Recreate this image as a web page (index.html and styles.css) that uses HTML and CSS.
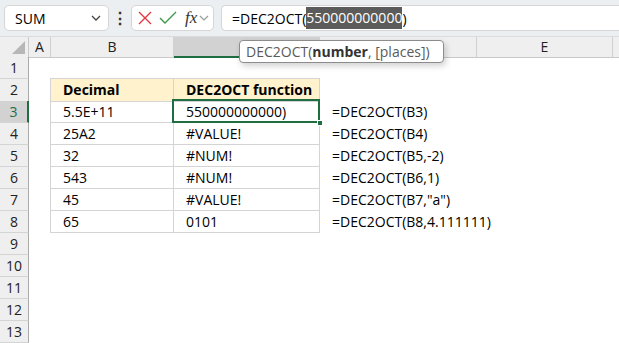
FILE: index.html
```html
<!DOCTYPE html>
<html lang="en">
<head>
    <meta charset="UTF-8">
    <title>DEC2OCT</title>
    <link rel="stylesheet" href="styles.css">
</head>
<body>
    <div class="topbar">
        <div class="namebox">
            <span>SUM</span>
            <svg width="12" height="8" viewBox="0 0 12 8"><path d="M2 2l4 4 4-4" fill="none" stroke="#444" stroke-width="1.3"/></svg>
        </div>
        <div class="dots">&#8942;</div>
        <div class="btngroup">
            <svg width="16" height="16" viewBox="0 0 16 16"><path d="M2 2l12 12M14 2L2 14" stroke="#e0393e" stroke-width="1.4" fill="none"/></svg>
            <svg width="18" height="16" viewBox="0 0 18 16"><path d="M1 8l5 5L17 2" stroke="#3a9a4a" stroke-width="1.4" fill="none"/></svg>
            <span class="fx">fx</span>
            <svg width="10" height="8" viewBox="0 0 10 8"><path d="M1 2l4 4 4-4" fill="none" stroke="#999" stroke-width="1.2"/></svg>
        </div>
        <div class="formula">=DEC2OCT(<span class="sel">550000000000</span>)</div>
    </div>

    <div class="sheet">
        <div class="row colheads">
            <div class="corner"><span class="tri"></span></div>
            <div class="ch">A</div>
            <div class="ch">B</div>
            <div class="ch active"></div>
            <div class="ch"></div>
            <div class="ch">E</div>
            <div class="ch last"></div>
            <div class="tooltip">DEC2OCT(<b>number</b>, [places])</div>
        </div>
        <div class="row"><div class="rh">1</div><div></div><div></div><div></div><div></div><div></div><div></div></div>
        <div class="row"><div class="rh">2</div><div></div><div class="cell head first">Decimal</div><div class="cell head">DEC2OCT function</div><div></div><div></div><div></div></div>
        <div class="row"><div class="rh active">3</div><div></div><div class="cell first">5.5E+11</div><div class="cell selected">550000000000)</div><div class="txt">=DEC2OCT(B3)</div><div></div><div></div></div>
        <div class="row"><div class="rh">4</div><div></div><div class="cell first">25A2</div><div class="cell">#VALUE!</div><div class="txt">=DEC2OCT(B4)</div><div></div><div></div></div>
        <div class="row"><div class="rh">5</div><div></div><div class="cell first">32</div><div class="cell">#NUM!</div><div class="txt">=DEC2OCT(B5,-2)</div><div></div><div></div></div>
        <div class="row"><div class="rh">6</div><div></div><div class="cell first">543</div><div class="cell">#NUM!</div><div class="txt">=DEC2OCT(B6,1)</div><div></div><div></div></div>
        <div class="row"><div class="rh">7</div><div></div><div class="cell first">45</div><div class="cell">#VALUE!</div><div class="txt">=DEC2OCT(B7,"a")</div><div></div><div></div></div>
        <div class="row"><div class="rh">8</div><div></div><div class="cell first bottom">65</div><div class="cell bottom">0101</div><div class="txt">=DEC2OCT(B8,4.111111)</div><div></div><div></div></div>
        <div class="row"><div class="rh">9</div></div>
        <div class="row"><div class="rh">10</div></div>
        <div class="row"><div class="rh">11</div></div>
        <div class="row"><div class="rh">12</div></div>
        <div class="row"><div class="rh">13</div></div>
    </div>
</body>
</html>
```

FILE: styles.css
```css
body {
    margin: 0;
    width: 619px;
    height: 343px;
    overflow: hidden;
    background: #fff;
    font-family: "Open Sans", "Liberation Sans", Arial, sans-serif;
    font-size: 14px;
    color: #000;
}

.topbar {
    height: 36px;
    background: #ebeff1;
    display: flex;
    align-items: center;
    padding-left: 4px;
    box-sizing: border-box;
}

.namebox {
    width: 105px;
    height: 26px;
    box-sizing: border-box;
    background: #fff;
    border: 1px solid #d6d6d6;
    border-radius: 5px;
    display: flex;
    align-items: center;
    justify-content: space-between;
    padding: 0 6px 0 10px;
    font-size: 14px;
}

.dots {
    width: 22px;
    text-align: center;
    font-size: 16px;
    font-weight: bold;
    color: #333;
}

.btngroup {
    width: 83px;
    height: 26px;
    box-sizing: border-box;
    background: #fff;
    border: 1px solid #d6d6d6;
    border-radius: 5px;
    display: flex;
    align-items: center;
    gap: 6px;
    padding-left: 5px;
}

.fx {
    font-family: "Liberation Serif", serif;
    font-style: italic;
    font-size: 17px;
    color: #333;
    margin-left: 2px;
    margin-right: -4px;
}

.formula {
    flex: 1;
    height: 26px;
    margin-left: 7px;
    box-sizing: border-box;
    background: #fff;
    border: 1px solid #d6d6d6;
    border-right: none;
    border-radius: 5px 0 0 5px;
    display: flex;
    align-items: center;
    padding-left: 10px;
    font-size: 14px;
}

.formula .sel {
    background: #5b5b5b;
    color: #fff;
    padding: 1px 0 2px;
}

.row {
    display: grid;
    grid-template-columns: 29px 22px 123px 146px 157px 136px 6px;
    height: 22px;
    position: relative;
}

.colheads {
    height: 21px;
    background: #efefef;
    border-top: 1px solid #dcdcdc;
    box-sizing: border-box;
}

.corner {
    position: relative;
    border-right: 1px solid #c9c9c9;
    border-bottom: 1px solid #c9c9c9;
}

.tri {
    position: absolute;
    right: 3px;
    bottom: 3px;
    width: 0;
    height: 0;
    border-left: 13px solid transparent;
    border-bottom: 13px solid #b7b7b7;
}

.ch {
    border-right: 1px solid #d0d0d0;
    border-bottom: 1px solid #c9c9c9;
    text-align: center;
    line-height: 20px;
    font-size: 14px;
    color: #222;
}

.ch.active {
    background: #d2d2d2;
    border-bottom: 2px solid #1e6e42;
}

.ch.last {
    border-right: none;
}

.rh {
    background: #efefef;
    border-right: 1px solid #a9a9a9;
    border-bottom: 1px solid #d4d4d4;
    text-align: center;
    line-height: 21px;
    font-size: 14px;
    color: #222;
}

.rh.active {
    background: #d2d2d2;
    color: #1e6e42;
    border-right: 2px solid #1e6e42;
}

.cell {
    border-right: 1px solid #d4d4d4;
    border-bottom: 1px solid #d4d4d4;
    padding-left: 12px;
    line-height: 21px;
    white-space: nowrap;
}

.cell.first {
    border-left: 1px solid #d4d4d4;
    margin-left: -1px;
}

.cell.head {
    background: #fff2cc;
    font-weight: bold;
    border-top: 1px solid #d4d4d4;
    margin-top: -1px;
    line-height: 22px;
}

.cell.selected {
    position: relative;
}

.cell.selected::after {
    content: "";
    position: absolute;
    left: -2px;
    top: -2px;
    right: -1px;
    bottom: -1px;
    border: 2px solid #1e6e42;
}

.cell.selected::before {
    content: "";
    position: absolute;
    right: -4px;
    bottom: -4px;
    width: 6px;
    height: 6px;
    background: #1e6e42;
    border: 1px solid #fff;
    box-sizing: border-box;
    z-index: 1;
}

.txt {
    padding-left: 12px;
    line-height: 22px;
    white-space: nowrap;
}

.tooltip {
    position: absolute;
    left: 239px;
    top: 3px;
    width: 205px;
    height: 23px;
    box-sizing: border-box;
    background: #fff;
    border: 1px solid #8c8c8c;
    border-radius: 4px;
    box-shadow: 2px 3px 6px rgba(0, 0, 0, 0.18);
    padding-left: 6px;
    line-height: 21px;
    font-size: 14px;
    color: #5a5a5a;
    white-space: nowrap;
    z-index: 2;
}

.tooltip b {
    color: #333;
}
```
